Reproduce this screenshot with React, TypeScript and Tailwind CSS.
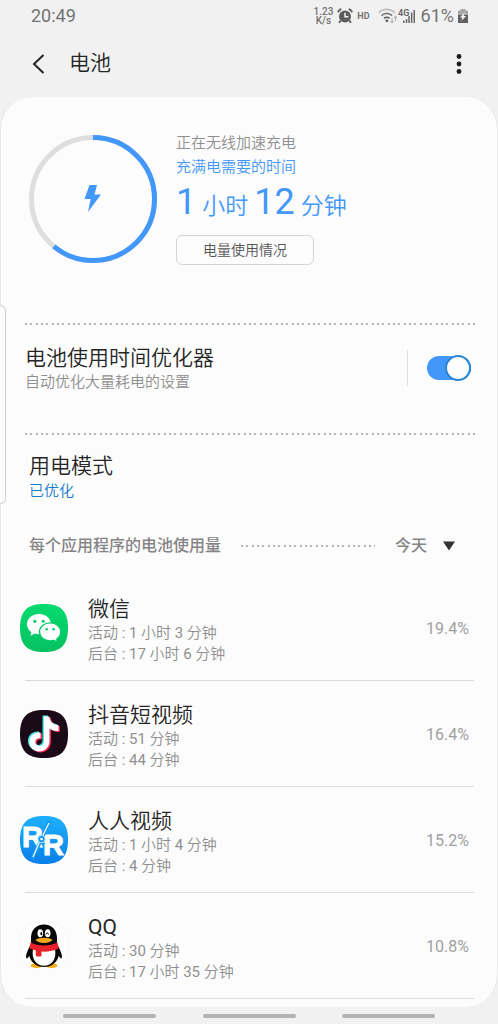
import React, { useState } from "react";

function AlarmIcon() {
  return (
    <svg viewBox="0 0 16 16" className="h-4 w-4" aria-hidden="true">
      <circle cx="8" cy="8.5" r="6" fill="#5c5c5c" />
      <path d="M3.6 12.6 2 14.8M12.4 12.6 14 14.8" stroke="#5c5c5c" strokeWidth="1.8" />
      <path d="M1 4.4C1.3 2.8 2.6 1.5 4.3 1.1M15 4.4c-.3-1.6-1.6-2.9-3.3-3.3" fill="none" stroke="#5c5c5c" strokeWidth="1.7" />
      <path d="M8 4.8v4h3.4" fill="none" stroke="#f1f1f1" strokeWidth="1.5" />
    </svg>
  );
}

function WifiIcon() {
  return (
    <svg viewBox="0 0 20 16" className="h-4 w-5" fill="none" aria-hidden="true">
      <path d="M.8 4.800c4.400-4.600 11.600-4.600 16 0" stroke="#bdbdbd" strokeWidth="1.700" />
      <path d="M3.500 7.700c2.900-3 7.700-3 10.600 0" stroke="#7d7d7d" strokeWidth="1.700" />
      <path d="M6.100 10.400c1.500-1.500 3.900-1.500 5.400 0" stroke="#5f5f5f" strokeWidth="1.700" />
      <circle cx="8.800" cy="12.800" r="1.400" fill="#5f5f5f" />
      <path d="M14 10v4.500M12.600 13.100 14 14.700l1.400-1.600M17.500 13V8.500M16.100 9.900l1.400-1.600 1.400 1.600" stroke="#b5b5b5" strokeWidth="1.100" />
    </svg>
  );
}

function SignalIcon() {
  return (
    <svg viewBox="0 0 18 18" className="h-[18px] w-[18px]" aria-hidden="true">
      <path d="M5 13.500h1.500V16H5zM7.800 12h1.500v4H7.800zM10.300 9h1.500v7h-1.500zM12.900 5.500h1.500V16h-1.500zM15.500 3H17v13h-1.500z" fill="#666" />
      <text x="0" y="9" fontFamily="Roboto, sans-serif" fontSize="9" fontWeight="600" fill="#626262" stroke="#f1f1f1" strokeWidth="1" paintOrder="stroke">4G</text>
    </svg>
  );
}

function BatteryIcon() {
  return (
    <svg viewBox="0 0 12 16" className="h-4 w-3" aria-hidden="true">
      <path d="M3.500 1h5v1.600H11V7H1V2.600h2.500z" fill="#a8a8a8" />
      <path d="M1 7h10v8H1z" fill="#616161" />
      <path d="M7.800 4.300 3 9.400h2.500L4.300 13 9.200 8H6.700z" fill="#f5f5f5" />
    </svg>
  );
}

function StatusBar() {
  return (
    <div className="flex h-8 items-center justify-between pr-[29px] pl-[31px] text-lg text-[#737373]">
      <time>20:49</time>
      <div className="flex items-center">
        <div className="mr-1 text-center text-[10px] leading-[9px] font-medium">
          <div>1.23</div>
          <div>K/s</div>
        </div>
        <AlarmIcon />
        <span className="mr-2 ml-1 text-[9px] font-bold">HD</span>
        <WifiIcon />
        <SignalIcon />
        <span className="mr-[3px] ml-[5px] leading-6">61%</span>
        <BatteryIcon />
      </div>
    </div>
  );
}

const TILE = "M24 0C41 0 48 7 48 24S41 48 24 48 0 41 0 24 7 0 24 0z";
const NOTE =
  "M22.500 6h5.300c.5 4.700 3.500 8.200 9.200 8.700v5.800c-3.400.1-6.400-.8-9-2.600v12.200c0 7-4.700 10.900-10.200 10.900C12 41 8 36.800 8 31.500c0-6 4.800-9.900 11-9.400v5.700c-3-.4-5.200 1.100-5.200 3.700 0 2.300 1.800 3.900 4 3.900 2.900 0 4.700-1.800 4.700-5z";

function WeChatIcon() {
  return (
    <svg viewBox="0 0 48 48" className="h-12 w-12 shrink-0" aria-hidden="true">
      <defs>
        <linearGradient id="wechat" x1="0" y1="0" x2="0" y2="1">
          <stop offset="0" stopColor="#07db6f" />
          <stop offset="1" stopColor="#05c160" />
        </linearGradient>
      </defs>
      <path d={TILE} fill="url(#wechat)" />
      <path d="M19 10C12.200 10 7 14.500 7 20.200c0 3.200 1.600 6 4.300 7.900L10.600 31.800l4.200-2.200c1.300.4 2.700.6 4.200.6 6.800 0 12-4.500 12-10S25.800 10 19 10z" fill="#fff" />
      <path d="M30.200 18.800c-6 0-10.700 3.900-10.700 9 0 5 4.700 9 10.700 9 1.300 0 2.500-.2 3.600-.5l3.700 1.900-.7-3.200c2.500-1.700 4-4.200 4-7.200 0-5.100-4.600-9-10.600-9z" fill="#fff" stroke="#07cc67" strokeWidth="1.300" />
      <g fill="#07cf68">
        <circle cx="14.800" cy="17.300" r="1.600" />
        <circle cx="23.200" cy="17.300" r="1.600" />
        <circle cx="26.700" cy="25.300" r="1.300" />
        <circle cx="33.700" cy="25.300" r="1.300" />
      </g>
    </svg>
  );
}

function DouyinIcon() {
  return (
    <svg viewBox="0 0 48 48" className="h-12 w-12 shrink-0" aria-hidden="true">
      <path d={TILE} fill="#1b0a17" />
      <path d={NOTE} transform="translate(3 1.500)" fill="#ee2850" />
      <path d={NOTE} transform="translate(0 -.5)" fill="#4ce9e8" />
      <path d={NOTE} transform="translate(1.500 .5)" fill="#fff" />
    </svg>
  );
}

function RenrenIcon() {
  return (
    <svg viewBox="0 0 48 48" className="h-12 w-12 shrink-0" aria-hidden="true">
      <defs>
        <linearGradient id="renren" x1="0" y1="0" x2="0" y2="1">
          <stop offset="0" stopColor="#20b0fb" />
          <stop offset="1" stopColor="#087fe8" />
        </linearGradient>
      </defs>
      <path d={TILE} fill="url(#renren)" />
      <g fontFamily="Liberation Sans, Arial, sans-serif" fontSize="29" fontWeight="700" fill="#fff" stroke="#fff" strokeWidth="1">
        <text x="2" y="31">R</text>
        <text x="23" y="39">R</text>
      </g>
      <path d="M29.500 5 12.500 43" stroke="#149af2" strokeWidth="3.500" />
      <path d="M29 7 22.500 20M19.500 26 13 41" stroke="#fff" strokeWidth="1.200" />
      <circle cx="21.500" cy="23" r="3.700" fill="#1596f1" stroke="#c5eaff" strokeWidth="1" />
      <circle cx="21.500" cy="23" r="1.300" fill="#fff" />
    </svg>
  );
}

function QQIcon() {
  return (
    <svg viewBox="0 0 48 48" className="h-12 w-12 shrink-0" aria-hidden="true">
      <path d={TILE} fill="#fff" stroke="#f0f0f0" strokeWidth=".6" />
      <ellipse cx="16.500" cy="43.600" rx="6" ry="2.400" fill="#f7ad16" />
      <ellipse cx="31.500" cy="43.600" rx="6" ry="2.400" fill="#f7ad16" />
      <path d="M24 2.500c-8 0-13 5.600-13 13.500v6c-2.500 4.500-5.300 10-4.900 13.500.2 1.800 1.400 1 3.200-1.700C10.700 40.500 16.500 45 24 45s13.300-4.500 14.700-11.200c1.800 2.700 3 3.500 3.200 1.700.4-3.500-2.400-9-4.900-13.500v-6C37 8.100 32 2.500 24 2.500z" fill="#080808" />
      <path d="M13 27h22c1.800 9.800-3 16.800-11 16.800S11.200 36.800 13 27z" fill="#fff" />
      <path d="M10.500 20.500c8 4 19 4 27 0l1.200 6c-5.500 2.600-11.700 3.500-17.200 3V34c-1.700.9-4.100.7-5.700-.3v-5.200l-6.300-2z" fill="#e8222b" />
      <ellipse cx="20.300" cy="11.300" rx="2.800" ry="4" fill="#fff" />
      <ellipse cx="27.700" cy="11.300" rx="2.800" ry="4" fill="#fff" />
      <ellipse cx="21.300" cy="11.700" rx="1" ry="1.600" fill="#080808" />
      <path d="M26.200 12.500c.3-2.200 1.900-2.200 2.200 0" stroke="#080808" strokeWidth="1" fill="none" />
      <path d="M15.500 18c3-3 14-3 17 0-3.500 4-13.500 4-17 0z" fill="#f7a81a" />
    </svg>
  );
}

const DOTS =
  "h-[2px] bg-[linear-gradient(to_right,#b4b4b4_0_2px,transparent_2px_5px,#b4b4b4_5px_7px,transparent_7px_11px,#b4b4b4_11px_13px,transparent_13px)] bg-[length:16px_2px]";

const APPS = [
  { name: "微信", icon: <WeChatIcon />, active: "1 小时 3 分钟", background: "17 小时 6 分钟", share: "19.4%" },
  { name: "抖音短视频", icon: <DouyinIcon />, active: "51 分钟", background: "44 分钟", share: "16.4%" },
  { name: "人人视频", icon: <RenrenIcon />, active: "1 小时 4 分钟", background: "4 分钟", share: "15.2%" },
  { name: "QQ", icon: <QQIcon />, active: "30 分钟", background: "17 小时 35 分钟", share: "10.8%" },
];

/* Latin letters and digits take the regular weight, Chinese the lighter one. */
function Mixed({ text }: { text: string }) {
  return (
    <>
      {text.split(/([0-9A-Z:]+)/).map((part, i) =>
        i % 2 ? (
          <span key={i} className="font-normal">
            {part}
          </span>
        ) : (
          part
        ),
      )}
    </>
  );
}

function ChargeRing({ percent }: { percent: number }) {
  return (
    <svg viewBox="0 0 128 128" className="mt-1 h-32 w-32 shrink-0" role="img" aria-label={`${percent}%`}>
      <circle cx="64" cy="64" r="61.500" fill="none" stroke="#dedede" strokeWidth="5" />
      <circle cx="64" cy="64" r="61.500" fill="none" stroke="#4297fb" strokeWidth="5" pathLength="100" strokeDasharray={`${percent} 100`} transform="rotate(-90 64 64)" />
      <path d="M60.500 50H68l-2.500 9.500H72L59 77l2.700-13H55.500z" fill="#4297fb" />
    </svg>
  );
}

export default function App() {
  const [optimize, setOptimize] = useState(true);
  return (
    <div className="relative min-h-screen bg-[#f1f1f1] font-[Roboto,'Noto_Sans_CJK_SC',sans-serif] text-[#252525]">
      <StatusBar />
      <header className="flex h-[65px] items-center pr-[27px] pb-0.5 pl-8">
        <button type="button" aria-label="返回" className="flex h-8 w-[37px] items-center">
          <svg viewBox="0 0 14 20" className="h-5 w-3.5" fill="none" stroke="#252525" strokeWidth="2" aria-hidden="true">
            <path d="M11.500 1 2 10l9.500 9" />
          </svg>
        </button>
        <h1 className="grow text-[21px] font-[350]">电池</h1>
        <button type="button" aria-label="更多选项" className="flex h-8 w-6 items-center justify-center">
          <svg viewBox="0 0 6 20" className="h-5 w-1.5" fill="#1c1c1c" aria-hidden="true">
            <circle cx="3" cy="2.500" r="2.400" />
            <circle cx="3" cy="10" r="2.400" />
            <circle cx="3" cy="17.500" r="2.400" />
          </svg>
        </button>
      </header>

      <main className="overflow-hidden rounded-[32px] border-x border-[#e9e9e9] bg-[#fcfcfc] pb-2">
        <section className="flex gap-[19px] pt-[34px] pr-6 pb-[58px] pl-7">
          <ChargeRing percent={61} />
          <div>
            <p className="text-[15px] leading-6 font-[350] text-[#8f8f8f]">正在无线加速充电</p>
            <p className="text-[15px] leading-6 font-[350] text-[#4297fb]">充满电需要的时间</p>
            <p className="flex h-12 items-baseline gap-1.5 text-[23px] leading-[46px] font-[350] text-[#4297fb]">
              <span className="text-4xl leading-[46px] font-normal">1</span>
              <span>小时</span>
              <span className="text-4xl leading-[46px] font-normal">12</span>
              <span>分钟</span>
            </p>
            <button type="button" className="mt-2 h-[30px] w-[138px] rounded-md border border-[#d6d6d6] text-sm font-[350] text-[#555]">
              电量使用情况
            </button>
          </div>
        </section>

        <div className={`mr-[21px] ml-6 ${DOTS}`} />

        <section className="flex items-center justify-between pt-5 pr-[26px] pb-10 pl-6">
          <div>
            <h2 id="optimizer" className="text-[21px] leading-[26px] font-[350]">电池使用时间优化器</h2>
            <p className="text-[15px] leading-[22px] font-[350] text-[#8f8f8f]">自动优化大量耗电的设置</p>
          </div>
          <label className="mb-0.5 flex h-9 cursor-pointer items-center border-l border-[#e0e0e0] pl-[19px]">
            <input
              type="checkbox"
              role="switch"
              aria-labelledby="optimizer"
              checked={optimize}
              onChange={(e) => setOptimize(e.target.checked)}
              className="peer sr-only"
            />
            <span className="flex h-6 w-11 items-center justify-start rounded-full bg-[#bbb] peer-checked:justify-end peer-checked:bg-[#4297fb]">
              <span className="h-[26px] w-[26px] shrink-0 rounded-full border-2 border-[#2884d6] bg-[#fcfcfc]" />
            </span>
          </label>
        </section>

        <div className={`mr-[21px] ml-6 ${DOTS}`} />

        <section className="px-7 pt-[18px]">
          <h2 className="text-[21px] leading-[26px] font-[350]">用电模式</h2>
          <p className="text-[15px] leading-6 font-[350] text-[#197dcb]">已优化</p>
        </section>

        <section className="mt-3.5">
          <div className="flex h-[58px] items-center pr-[42px] pl-7 text-base font-medium text-[#858585]">
            <h2>每个应用程序的电池使用量</h2>
            <div className={`mr-5 ml-5 grow ${DOTS}`} />
            <div className="relative flex items-center">
              <select aria-label="日期" defaultValue="today" className="w-[60px] appearance-none bg-transparent">
                <option value="today">今天</option>
                <option value="yesterday">昨天</option>
              </select>
              <svg viewBox="0 0 12 10" className="pointer-events-none absolute right-0 h-2.5 w-3" fill="#333" aria-hidden="true">
                <path d="M0 .5h12L6 9.500z" />
              </svg>
            </div>
          </div>
          <ul>
            {APPS.map((app) => (
              <li key={app.name}>
                <div className="flex h-[105px] items-center pr-7 pl-[19px]">
                  {app.icon}
                  <div className="ml-5 grow pt-1.5 text-[15px] leading-[21px] font-[350] text-[#8f8f8f]">
                    <h3 className="text-[21px] leading-[27px] text-[#252525]">
                      <Mixed text={app.name} />
                    </h3>
                    <p>
                      <Mixed text={`活动 : ${app.active}`} />
                    </p>
                    <p>
                      <Mixed text={`后台 : ${app.background}`} />
                    </p>
                  </div>
                  <span className="pt-0.5 text-base text-[#a0a0a0]">{app.share}</span>
                </div>
                <div className="mr-[23px] ml-6 h-px bg-[#dadada]" />
              </li>
            ))}
          </ul>
        </section>
      </main>

      <div className="absolute top-[305px] left-0 h-[199px] w-1.5 rounded-r-md border border-l-0 border-[#cfcfcf] bg-[#fdfdfd]" />

      <nav className="flex h-[18px] items-center justify-between px-[63px]">
        <button type="button" aria-label="最近" className="h-1 w-[93px] rounded-full bg-[#b3b3b3]" />
        <button type="button" aria-label="主页" className="h-1 w-[93px] rounded-full bg-[#b3b3b3]" />
        <button type="button" aria-label="后退" className="h-1 w-[93px] rounded-full bg-[#b3b3b3]" />
      </nav>
    </div>
  );
}
